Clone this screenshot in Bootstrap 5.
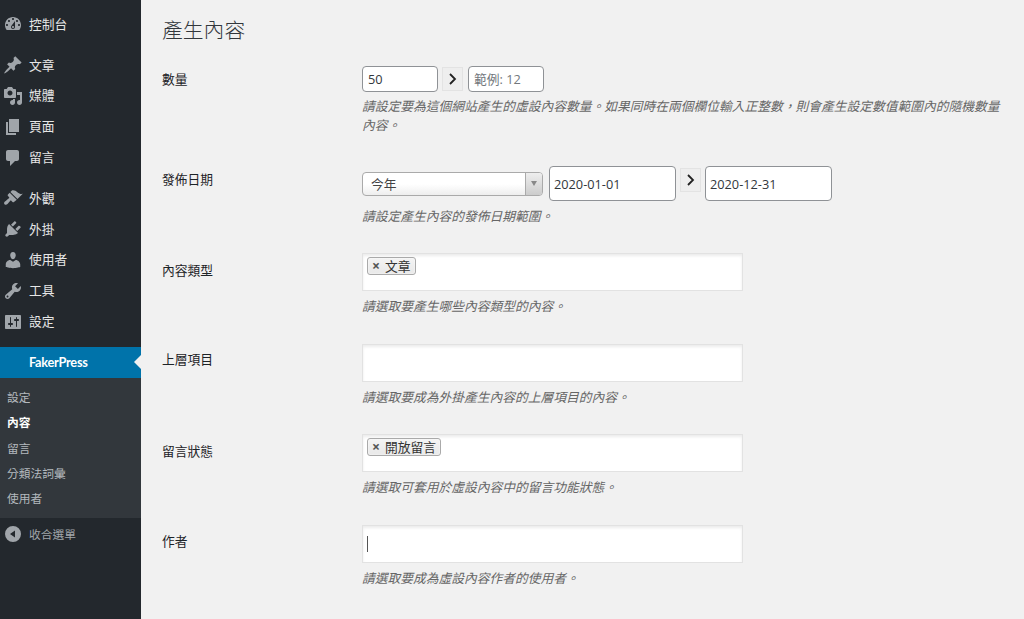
<!DOCTYPE html>
<html lang="zh-Hant">
<head>
<meta charset="utf-8">
<title>產生內容</title>
<link rel="stylesheet" href="https://cdn.jsdelivr.net/npm/bootstrap@5.3.0/dist/css/bootstrap.min.css">
<style>
html,body{height:100%;overflow:hidden}
body{font-family:"Open Sans","Noto Sans CJK TC",sans-serif;font-size:12.75px;background:#f1f1f1;color:#444}
.wp-shell{height:619px}
.wp-side{width:141px;background:#23282d;flex:none;padding-top:9px}
.wp-item{height:30.8px;display:flex;align-items:center;color:#e6e6e6;text-decoration:none;font-size:12.75px}
.wp-item svg{width:20px;height:20px;fill:#a0a5aa;margin-left:3px;margin-right:6px;flex:none}
.wp-gap{margin-top:10px}
.wp-current{background:#0073aa;color:#fff;height:31px;padding-left:29px;font-family:Lato,"Open Sans",sans-serif;font-weight:700;letter-spacing:-.25px;position:relative;margin-top:10px}
.wp-current::after{content:"";position:absolute;right:0;top:8px;border:7.5px solid transparent;border-right-color:#f1f1f1;border-left-width:0}
.wp-sub{background:#32373c;padding:7px 0}
.wp-sub a{display:block;height:25.3px;line-height:25.3px;padding-left:7px;font-size:11.75px;color:#b4b9be;text-decoration:none}
.wp-sub a.wp-on{color:#fff;font-weight:600}
.wp-collapse{color:#a0a5aa;font-size:11.75px;height:32px}
.wp-main{padding:17px 0 0 21px;min-width:0;flex:1}
.wp-title{font-size:20.8px;line-height:26px;font-weight:300;color:#32373c;margin:0 0 24px}
.wp-row{display:flex}
.wp-first{margin-top:-1px}
.wp-r2{margin-top:31px}
.wp-r28{margin-top:28px}
.wp-r27{margin-top:27px}
.wp-label{width:200px;flex:none;font-weight:400;color:#1d2327;line-height:18px}
.wp-lab1{padding-top:4px}
.wp-lab3{padding-top:8px}
.wp-lab4{padding-top:6px}
.wp-lab5{padding-top:7px}
.wp-field{width:640px}
.wp-desc{font-style:italic;color:#666;line-height:19px;margin:6px 0 0}
.wp-desc-first{margin-top:5px}
.wp-input.form-control{font-size:12.75px;color:#32373c;border:1px solid #8f9296;border-radius:4px;padding:0 5px;box-shadow:none;background:#fff}
.wp-input.form-control::placeholder{color:#72777c}
.wp-num.form-control{width:76px;height:26px}
.wp-num-next{margin-left:1px}
.wp-date.form-control{width:127px;height:35px;padding:0 4px}
.wp-arrow{width:21px;height:24px;background:#eee;border:1px solid #e3e3e3;display:flex;align-items:center;justify-content:center;flex:none}
.wp-arrow svg{width:10px;height:14px;fill:none;stroke:#222;stroke-width:1.8}
.wp-arrow-up{margin-bottom:8px}
.wp-select{width:181px;height:24px;border:1px solid #aaa;border-radius:4px;background:linear-gradient(#fff 50%,#eee);display:flex;align-items:stretch;font-size:12.75px;color:#444;margin-right:6px}
.wp-select-text{flex:1;padding-left:8px;line-height:22px}
.wp-select-btn{width:17px;background:linear-gradient(#eee,#ccc);border-left:1px solid #aaa;border-radius:0 3px 3px 0;display:flex;align-items:center;justify-content:center}
.wp-caret{border:3px solid transparent;border-top:5px solid #888;border-bottom-width:0}
.wp-box{width:381px;height:38px;background:#fff;border:1px solid #e2e2e2;box-shadow:inset 0 2px 3px rgba(0,0,0,.08);padding:3px 4px 4px;display:flex;align-items:flex-start}
.wp-tag{height:18px;border:1px solid #aaa;border-radius:3px;background:linear-gradient(#f4f4f4,#e8e8e8);box-shadow:inset 0 0 2px #fff;padding:0 4px;line-height:15px;color:#333;display:flex;align-items:center;gap:5px;font-size:12.75px}
.wp-x{color:#555;font-size:14px;font-weight:700;line-height:1}
.wp-cursor{width:1px;height:16px;background:#555;margin-top:7px}
</style>
</head>
<body>
<div class="d-flex wp-shell">
<nav class="wp-side">
  <a class="wp-item" href="#"><svg viewBox="0 0 20 20"><path d="M3.76 16h12.48c1.1-1.37 1.76-3.11 1.76-5 0-4.42-3.58-8-8-8s-8 3.58-8 8c0 1.89.66 3.63 1.76 5zM10 4c.55 0 1 .45 1 1s-.45 1-1 1-1-.45-1-1 .45-1 1-1zM6 6c.55 0 1 .45 1 1s-.45 1-1 1-1-.45-1-1 .45-1 1-1zm8 0c.55 0 1 .45 1 1s-.45 1-1 1-1-.45-1-1 .45-1 1-1zm-5.37 5.55L12 7v6c0 1.1-.9 2-2 2s-2-.9-2-2c0-.57.24-1.08.63-1.45zM4 10c.55 0 1 .45 1 1s-.45 1-1 1-1-.45-1-1 .45-1 1-1zm12 0c.55 0 1 .45 1 1s-.45 1-1 1-1-.45-1-1 .45-1 1-1zm-5 3c0-.55-.45-1-1-1s-1 .45-1 1 .45 1 1 1 1-.45 1-1z"/></svg>控制台</a>
  <a class="wp-item wp-gap" href="#"><svg viewBox="0 0 20 20"><path d="M10.44 3.02l1.82-1.82 6.36 6.35-1.83 1.82c-1.05-.68-2.48-.57-3.41.36l-.75.75c-.92.93-1.04 2.35-.35 3.41l-1.83 1.82-2.41-2.41-2.8 2.79c-.42.42-3.38 2.71-3.8 2.29s1.86-3.39 2.28-3.81l2.79-2.79L4.1 9.36l1.83-1.82c1.05.69 2.48.57 3.4-.36l.75-.75c.93-.92 1.05-2.35.36-3.41z"/></svg>文章</a>
  <a class="wp-item" href="#"><svg viewBox="0 0 20 20"><path d="M13 11V4c0-.55-.45-1-1-1h-1.67L9 1H5L3.67 3H2c-.55 0-1 .45-1 1v7c0 .55.45 1 1 1h10c.55 0 1-.45 1-1zM7 4.5c1.38 0 2.5 1.12 2.5 2.5S8.38 9.5 7 9.5 4.5 8.38 4.5 7 5.62 4.5 7 4.5zM14 6h5v10.5c0 1.38-1.12 2.5-2.5 2.5S14 17.88 14 16.5s1.12-2.5 2.5-2.5c.17 0 .34.02.5.05V9h-3V6zm-4 8.05V13h2v3.5c0 1.38-1.12 2.5-2.5 2.5S7 17.88 7 16.5 8.12 14 9.5 14c.17 0 .34.02.5.05z"/></svg>媒體</a>
  <a class="wp-item" href="#"><svg viewBox="0 0 20 20"><path d="M6 15V2h10v13H6zm-1 1h8v2H3V5h2v11z"/></svg>頁面</a>
  <a class="wp-item" href="#"><svg viewBox="0 0 20 20"><path d="M5 2h9c1.1 0 2 .9 2 2v7c0 1.1-.9 2-2 2h-2l-5 5v-5H5c-1.1 0-2-.9-2-2V4c0-1.1.9-2 2-2z"/></svg>留言</a>
  <a class="wp-item wp-gap" href="#"><svg viewBox="0 0 20 20"><path d="M14.48 11.06L7.41 3.99l1.5-1.5c.5-.56 2.3-.47 3.51.32 1.21.8 1.43 1.28 2.91 2.1 1.18.64 2.45 1.26 4.45.85zm-.71.71L6.7 4.7 4.93 6.47c-.39.39-.39 1.02 0 1.41l1.06 1.06c.39.39.39 1.03 0 1.42-.6.6-1.43 1.11-2.21 1.69-.35.26-.7.53-1.01.84C1.43 13.23.76 14.8 1.2 15.8c.45.99 1.98 1.65 3.3.31.33-.32.6-.68.86-1.02.58-.79 1.1-1.61 1.7-2.2.39-.39 1.03-.39 1.42 0l1.06 1.06c.39.39 1.02.39 1.41 0z"/></svg>外觀</a>
  <a class="wp-item" href="#"><svg viewBox="0 0 20 20"><path d="M13.11 4.36L9.87 7.6 8 5.73l3.24-3.24c.35-.34 1.05-.2 1.56.32.52.51.66 1.21.31 1.55zm-8 1.77l.91-1.12 9.01 9.01-1.19.84c-.71.71-2.63 1.16-3.82 1.16H6.14L4.9 17.26c-.59.59-1.54.59-2.12 0-.59-.58-.59-1.53 0-2.12l1.24-1.24v-3.88c0-1.13.4-3.19 1.09-3.89zm7.26 3.97l3.24-3.24c.34-.35 1.04-.21 1.55.31.52.51.66 1.21.31 1.55l-3.24 3.25z"/></svg>外掛</a>
  <a class="wp-item" href="#"><svg viewBox="0 0 20 20"><path d="M10 9.25c-2.27 0-2.73-3.44-2.73-3.44C7 4.02 7.82 2 9.97 2c2.16 0 2.98 2.02 2.71 3.81 0 0-.41 3.44-2.68 3.44zm0 2.57L12.72 10c2.39 0 4.52 2.33 4.52 4.53v2.49s-3.65 1.13-7.24 1.13c-3.65 0-7.24-1.13-7.24-1.13v-2.49c0-2.25 1.94-4.48 4.47-4.48z"/></svg>使用者</a>
  <a class="wp-item" href="#"><svg viewBox="0 0 20 20"><path d="M16.68 9.77c-1.34 1.34-3.3 1.67-4.95.99l-5.41 6.52c-.99.99-2.59.99-3.58 0s-.99-2.59 0-3.57l6.52-5.42c-.68-1.65-.35-3.61.99-4.95 1.28-1.28 3.12-1.62 4.72-1.06l-2.89 2.89 2.82 2.82 2.86-2.87c.53 1.58.18 3.39-1.08 4.65zM3.81 16.21c.4.39 1.04.39 1.43 0 .4-.4.4-1.04 0-1.43-.39-.4-1.03-.4-1.43 0-.39.39-.39 1.03 0 1.43z"/></svg>工具</a>
  <a class="wp-item" href="#"><svg viewBox="0 0 20 20"><path d="M18 16V4c0-.55-.45-1-1-1H3c-.55 0-1 .45-1 1v12c0 .55.45 1 1 1h14c.55 0 1-.45 1-1zM8 11h1c.55 0 1 .45 1 1s-.45 1-1 1H8v1.5c0 .28-.22.5-.5.5s-.5-.22-.5-.5V13H6c-.55 0-1-.45-1-1s.45-1 1-1h1V5.5c0-.28.22-.5.5-.5s.5.22.5.5V11zm5-2h-1c-.55 0-1-.45-1-1s.45-1 1-1h1V5.5c0-.28.22-.5.5-.5s.5.22.5.5V7h1c.55 0 1 .45 1 1s-.45 1-1 1h-1v5.5c0 .28-.22.5-.5.5s-.5-.22-.5-.5V9z"/></svg>設定</a>
  <a class="wp-item wp-current" href="#">FakerPress</a>
  <div class="wp-sub">
    <a href="#">設定</a>
    <a class="wp-on" href="#">內容</a>
    <a href="#">留言</a>
    <a href="#">分類法詞彙</a>
    <a href="#">使用者</a>
  </div>
  <a class="wp-item wp-collapse" href="#"><svg viewBox="0 0 20 20"><path d="M10 2a8 8 0 1 1 0 16 8 8 0 0 1 0-16zm2 4.5L7 10l5 3.5z"/></svg>收合選單</a>
</nav>
<main class="wp-main">
  <h1 class="wp-title">產生內容</h1>
  <div class="wp-row wp-first">
    <div class="wp-label wp-lab1">數量</div>
    <div class="wp-field">
      <div class="d-flex align-items-center">
        <input class="form-control wp-input wp-num" value="50">
        <span class="wp-arrow mx-1"><svg viewBox="0 0 10 14"><path d="M2 2l5 5-5 5"/></svg></span>
        <input class="form-control wp-input wp-num wp-num-next" placeholder="範例: 12">
      </div>
      <p class="wp-desc wp-desc-first">請設定要為這個網站產生的虛設內容數量。如果同時在兩個欄位輸入正整數&#xFF0C;則會產生設定數值範圍內的隨機數量內容。</p>
    </div>
  </div>
  <div class="wp-row wp-r2">
    <div class="wp-label wp-lab1">發佈日期</div>
    <div class="wp-field">
      <div class="d-flex align-items-center">
        <div class="wp-select"><span class="wp-select-text">今年</span><span class="wp-select-btn"><i class="wp-caret"></i></span></div>
        <input class="form-control wp-input wp-date" value="2020-01-01">
        <span class="wp-arrow mx-1 wp-arrow-up"><svg viewBox="0 0 10 14"><path d="M2 2l5 5-5 5"/></svg></span>
        <input class="form-control wp-input wp-date" value="2020-12-31">
      </div>
      <p class="wp-desc">請設定產生內容的發佈日期範圍。</p>
    </div>
  </div>
  <div class="wp-row wp-r27">
    <div class="wp-label wp-lab3">內容類型</div>
    <div class="wp-field">
      <div class="wp-box"><span class="wp-tag"><span class="wp-x">×</span>文章</span></div>
      <p class="wp-desc">請選取要產生哪些內容類型的內容。</p>
    </div>
  </div>
  <div class="wp-row wp-r28">
    <div class="wp-label wp-lab4">上層項目</div>
    <div class="wp-field">
      <div class="wp-box"></div>
      <p class="wp-desc">請選取要成為外掛產生內容的上層項目的內容。</p>
    </div>
  </div>
  <div class="wp-row wp-r27">
    <div class="wp-label wp-lab3">留言狀態</div>
    <div class="wp-field">
      <div class="wp-box"><span class="wp-tag"><span class="wp-x">×</span>開放留言</span></div>
      <p class="wp-desc">請選取可套用於虛設內容中的留言功能狀態。</p>
    </div>
  </div>
  <div class="wp-row wp-r28">
    <div class="wp-label wp-lab5">作者</div>
    <div class="wp-field">
      <div class="wp-box"><span class="wp-cursor"></span></div>
      <p class="wp-desc">請選取要成為虛設內容作者的使用者。</p>
    </div>
  </div>
</main>
</div>
<script src="https://cdn.jsdelivr.net/npm/bootstrap@5.3.0/dist/js/bootstrap.bundle.min.js"></script>
</body>
</html>
